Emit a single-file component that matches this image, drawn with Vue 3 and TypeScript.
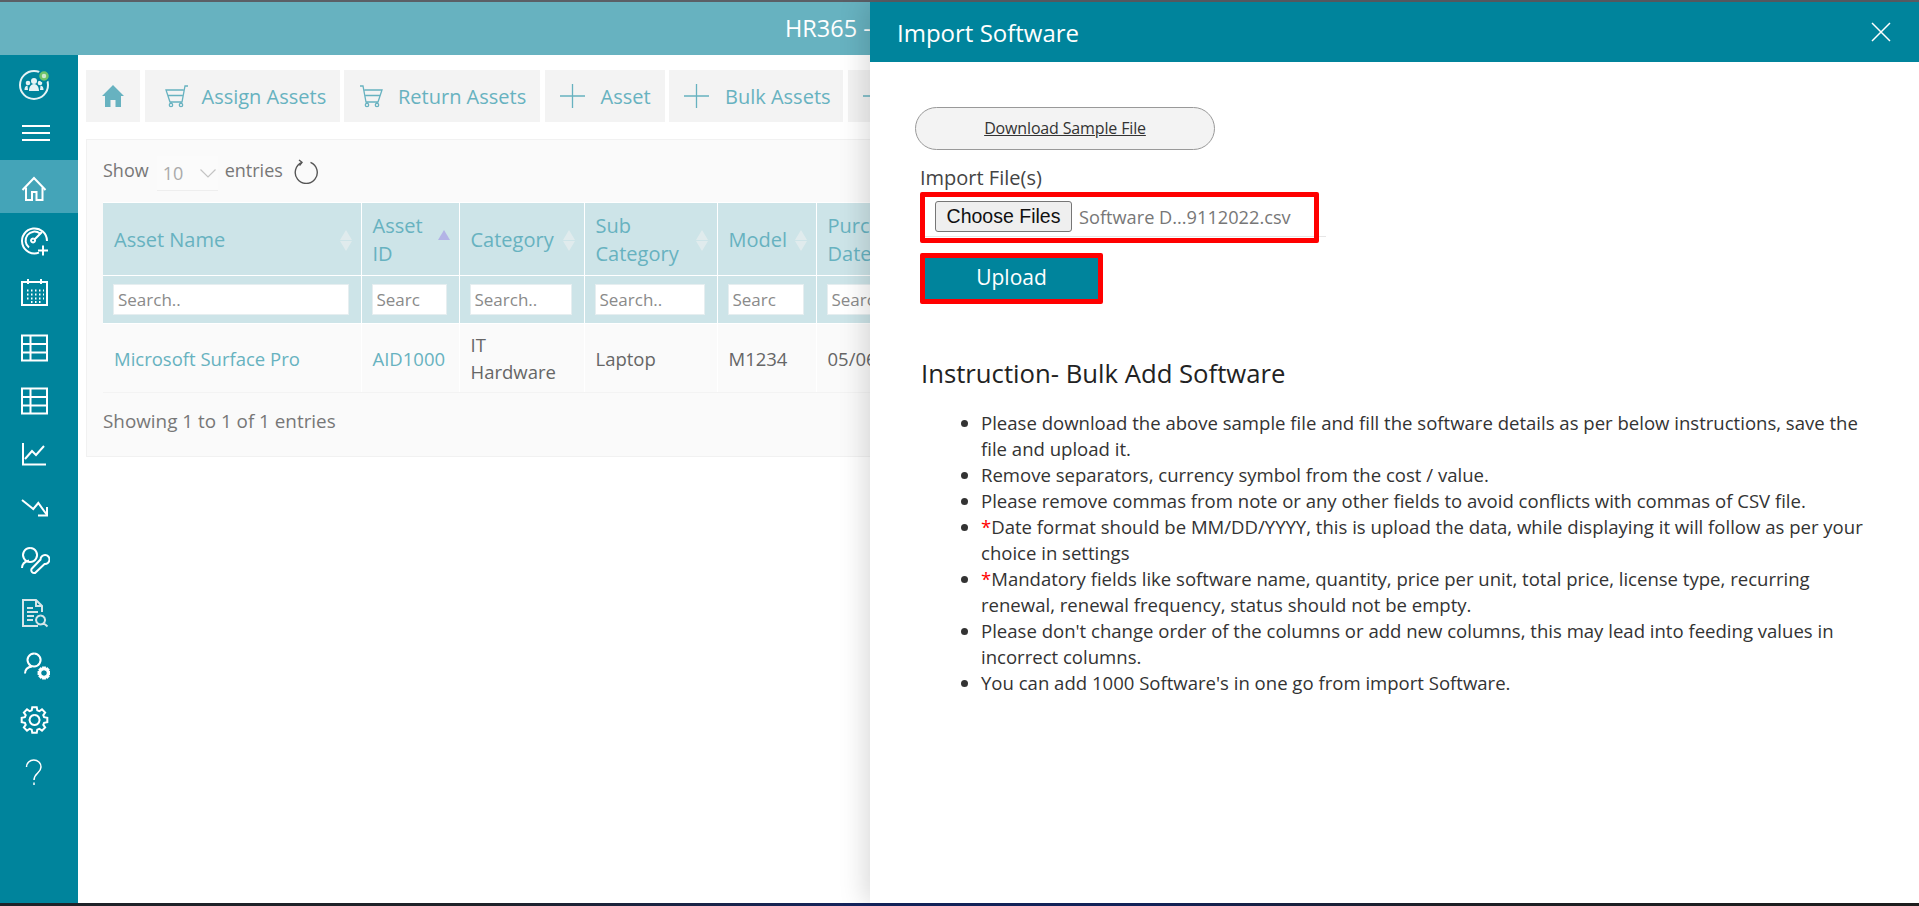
<script setup lang="ts">
interface NavItem {
  name: string
  paths: string[]
  active?: boolean
  muted?: boolean
  thin?: boolean
}

// gear outline with square-ish teeth
function gearPath(cx: number, cy: number, outer: number, inner: number, teeth: number): string {
  const step = (Math.PI * 2) / teeth
  const pts: string[] = []
  for (let i = 0; i < teeth; i++) {
    const a = i * step - Math.PI / 2
    const offs: [number, number][] = [
      [-0.36, inner],
      [-0.22, outer],
      [0.22, outer],
      [0.36, inner]
    ]
    for (const [o, r] of offs) {
      const t = a + o * step
      pts.push(`${(cx + Math.cos(t) * r).toFixed(2)} ${(cy + Math.sin(t) * r).toFixed(2)}`)
    }
  }
  return 'M' + pts.join('L') + 'Z'
}

const tableIcon = ['M4 4.500h25v25H4z', 'M4 13h25M4 21.500h25M12.500 4.500v25']

const navItems: NavItem[] = [
  { name: 'home', active: true, paths: ['M4.500 19 16 7l11.500 12', 'M8 16.500V29h6v-8h4.500v8h6V16.500'] },
  {
    name: 'dashboard',
    paths: [
      'M21 28.600A12.500 12.500 0 1 1 29 17',
      'M11 23.500A8.500 8.500 0 0 1 22 9.500',
      'M15 14.500a2 2 0 1 0 .1 0M16.500 15.500 24 8',
      'M20 26.500h10M25 21.500v10'
    ]
  },
  {
    name: 'calendar',
    paths: [
      'M4 5h25v23H4z',
      'M10 2v5M23 2v5',
      'M9 13.500h1.500M13 13.500h1.500M17 13.500h1.500M21 13.500h1.500M25 13.500h1',
      'M9 17.500h1.500M13 17.500h1.500M17 17.500h1.500M21 17.500h1.500M25 17.500h1',
      'M9 21.500h1.500M13 21.500h1.500M17 21.500h1.500M21 21.500h1.500M25 21.500h1',
      'M13 25h1.500M17 25h1.500M21 25h1.500'
    ]
  },
  { name: 'assets', paths: tableIcon },
  { name: 'software', paths: tableIcon },
  { name: 'growth', paths: ['M5 6v21.500h23', 'M7 22l7-8 4 4 8-9'] },
  { name: 'decline', paths: ['M4 10l11.300 9 5-6L29 25', 'M29 17v8.500h-9'] },
  {
    name: 'user-tool',
    paths: [
      'M12 4a7 7 0 1 0 .1 0',
      'M4 24c0-4.500 3-6.500 7-7.500',
      'M13.500 25l9-9.500a4.500 4.500 0 1 1 4 4.500l-9.500 9a3 3 0 0 1-3.500-4z'
    ]
  },
  {
    name: 'report',
    muted: true,
    paths: [
      'M20 29H5V3h13l6 6v6',
      'M18 3v6h6',
      'M9 11h6M9 15h11M9 19h7M9 23h6',
      'M22.500 18.500a4.500 4.500 0 1 0 .1 0M25.500 26l4 3.500'
    ]
  },
  {
    name: 'user-settings',
    paths: [
      'M16 3.500a6.500 6.500 0 1 0 .1 0',
      'M7 23.500c0-4.500 3-6.500 7-7',
      gearPath(26, 23, 5.5, 3.7, 8)
    ]
  },
  { name: 'settings', paths: [gearPath(16.5, 16, 13, 10, 8), 'M16.500 11a5 5 0 1 0 .1 0'] },
  { name: 'help', thin: true, paths: ['M8.500 10c0-4 3.300-7 7.300-7s7.200 3 7.200 7c0 6-7 6-7 13', 'M16 25.500V28'] }
]

const toolButtons = [
  { label: 'Assign Assets', icon: 'cart', width: 195 },
  { label: 'Return Assets', icon: 'cart-flip', width: 196 },
  { label: 'Asset', icon: 'plus', width: 120 },
  { label: 'Bulk Assets', icon: 'plus', width: 174 }
]

const columns = [
  { label: 'Asset Name', width: 258, search: 'Search..', sort: 'none' },
  { label: 'Asset ID', width: 98, search: 'Searc', sort: 'asc' },
  { label: 'Category', width: 125, search: 'Search..', sort: 'none' },
  { label: 'Sub Category', width: 133, search: 'Search..', sort: 'none' },
  { label: 'Model', width: 99, search: 'Searc', sort: 'none' },
  { label: 'Purchase Date', width: 125, search: 'Search..', sort: 'none' }
]

const instructions = [
  { text: 'Please download the above sample file and fill the software details as per below instructions, save the file and upload it.' },
  { text: 'Remove separators, currency symbol from the cost / value.' },
  { text: 'Please remove commas from note or any other fields to avoid conflicts with commas of CSV file.' },
  { req: true, text: 'Date format should be MM/DD/YYYY, this is upload the data, while displaying it will follow as per your choice in settings' },
  { req: true, text: 'Mandatory fields like software name, quantity, price per unit, total price, license type, recurring renewal, renewal frequency, status should not be empty.' },
  { text: "Please don't change order of the columns or add new columns, this may lead into feeding values in incorrect columns." },
  { text: "You can add 1000 Software's in one go from import Software." }
]
</script>

<template>
  <div class="page">
    <div class="top-strip"></div>
    <header class="app-header">HR365 -</header>
    <div class="app-body">
      <aside class="sidebar">
        <div class="logo">
          <svg width="36" height="36" viewBox="0 0 36 36">
            <circle cx="17" cy="19" r="14" fill="none" stroke="#e6f3f5" stroke-width="2" />
            <circle cx="17" cy="15" r="3" fill="#e6f3f5" />
            <circle cx="11" cy="17" r="2.300" fill="#e6f3f5" />
            <circle cx="23" cy="17" r="2.300" fill="#e6f3f5" />
            <path d="M12 25c0-4 2-7 5-7s5 3 5 7zM7.500 24c0-3 1-4 3-4.500L11 24zM26.500 24c0-3-1-4-3-4.500L23 24z" fill="#e6f3f5" />
            <circle cx="27" cy="10" r="6.500" fill="#00849c" />
            <circle cx="27" cy="10" r="3.500" fill="#cfe8d0" stroke="#6fc46a" stroke-width="2.500" />
          </svg>
        </div>
        <div class="menu-toggle">
          <span></span>
          <span></span>
          <span></span>
        </div>
        <nav class="nav">
          <a v-for="item in navItems" :key="item.name" class="nav-item" :class="{ active: item.active }">
            <svg
              width="32"
              height="32"
              viewBox="0 0 32 32"
              fill="none"
              :stroke="item.muted ? '#d6e6e9' : '#fff'"
              :stroke-width="item.thin ? 1.5 : 2"
            >
              <path v-for="(d, i) in item.paths" :key="i" :d="d" />
            </svg>
          </a>
        </nav>
      </aside>

      <main class="content">
        <div class="toolbar">
          <button class="tool home-tool">
            <svg width="22" height="22" viewBox="0 0 22 22" fill="#67b2c0">
              <path d="M11 0 0 11h3v11h5.500v-7h5v7H19V11h3z" />
            </svg>
          </button>
          <button v-for="b in toolButtons" :key="b.label" class="tool" :style="{ width: b.width + 'px' }">
            <svg v-if="b.icon === 'plus'" class="tool-icon" width="25" height="26" viewBox="0 0 25 26" stroke="#67b2c0" stroke-width="1.300">
              <path d="M12.500 1v24M0 13h25" />
            </svg>
            <svg
              v-else
              class="tool-icon"
              :class="b.icon === 'cart' ? 'cart' : 'flip'"
              width="25"
              height="26"
              viewBox="0 0 25 26"
              fill="none"
              stroke="#67b2c0"
              stroke-width="1.300"
            >
              <path d="M24 3h-3l-3 16H6L2 7h17.500M3.500 12.500h15M7 19v1M17 19v1" />
              <circle cx="7" cy="22" r="1.700" />
              <circle cx="17" cy="22" r="1.700" />
            </svg>
            <span>{{ b.label }}</span>
          </button>
          <button class="tool tail-tool">
            <svg class="tool-icon" width="25" height="26" viewBox="0 0 25 26" stroke="#67b2c0" stroke-width="1.300">
              <path d="M12.500 1v24M0 13h25" />
            </svg>
          </button>
        </div>

        <section class="card">
          <div class="length-row">
            <span class="length-text">Show</span>
            <span class="length-select">
              <span>10</span>
              <svg width="16" height="9" viewBox="0 0 16 9" fill="none" stroke="#c4c4c4" stroke-width="1.200">
                <path d="M.5.500 8 8 15.500.500" />
              </svg>
            </span>
            <span class="length-text">entries</span>
            <svg class="refresh" width="25" height="25" viewBox="0 0 25 25" fill="none" stroke="#555" stroke-width="1.400">
              <path d="M16.500 3.300A11 11 0 1 1 8 3.300" />
              <path d="M5 1l3 2.300L5.500 6.500" />
            </svg>
          </div>

          <table class="grid">
            <colgroup>
              <col v-for="c in columns" :key="c.label" :style="{ width: c.width + 'px' }" />
            </colgroup>
            <thead>
              <tr class="head-row">
                <th v-for="c in columns" :key="c.label">
                  <div class="head-cell">
                    <span class="head-label">{{ c.label }}</span>
                    <span class="sorter" :class="c.sort"><i class="up"></i><i class="down"></i></span>
                  </div>
                </th>
              </tr>
              <tr class="search-row">
                <th v-for="c in columns" :key="c.label">
                  <input class="search" type="text" :placeholder="c.search" />
                </th>
              </tr>
            </thead>
            <tbody>
              <tr class="data-row">
                <td class="link">Microsoft Surface Pro</td>
                <td class="link">AID1000</td>
                <td>IT Hardware</td>
                <td>Laptop</td>
                <td>M1234</td>
                <td>05/06</td>
              </tr>
            </tbody>
          </table>

          <div class="info">Showing 1 to 1 of 1 entries</div>
        </section>
      </main>
    </div>
    <div class="bottom-strip"></div>

    <aside class="drawer">
      <div class="drawer-head">
        <span>Import Software</span>
        <svg width="20" height="20" viewBox="0 0 20 20" stroke="#fff" stroke-width="1.500">
          <path d="M1 1l18 18M19 1 1 19" />
        </svg>
      </div>
      <div class="drawer-body">
        <a class="sample-btn">Download Sample File</a>
        <label class="file-label">Import File(s)</label>
        <div class="file-box">
          <span class="file-btn">Choose Files</span>
          <span class="file-name">Software D...9112022.csv</span>
        </div>
        <button class="upload-btn">Upload</button>
        <h3 class="instr-title">Instruction- Bulk Add Software</h3>
        <ul class="instr-list">
          <li v-for="(row, i) in instructions" :key="i"><span v-if="row.req" class="req">*</span>{{ row.text }}</li>
        </ul>
      </div>
    </aside>
  </div>
</template>

<style scoped>
.page {
  position: relative;
  width: 1919px;
  height: 906px;
  display: flex;
  flex-direction: column;
  overflow: hidden;
  background: #fff;
  font-family: "Open Sans", "Noto Sans", sans-serif;
  color: #666;
}

.top-strip {
  height: 2px;
  background: #5b5f66;
}

.app-header {
  height: 53px;
  flex: none;
  background: #67b2c0;
  color: #fff;
  font-size: 23.500px;
  line-height: 52px;
  padding-left: 785px;
}

.app-body {
  flex: 1;
  display: flex;
  min-height: 0;
}

.bottom-strip {
  height: 3px;
  flex: none;
  background: linear-gradient(90deg, #1f2228 0%, #1f2228 25%, #14245e 45%, #14245e 60%, #1f2228 75%, #1f1f1f 100%);
}

.sidebar {
  width: 78px;
  flex: none;
  background: #00849c;
  display: flex;
  flex-direction: column;
}

.logo {
  height: 52px;
  padding: 11px 0 0 17px;
  box-sizing: border-box;
}

.menu-toggle {
  height: 53px;
  padding: 18px 0 0 22px;
  box-sizing: border-box;
  display: flex;
  flex-direction: column;
  gap: 5px;
}

.menu-toggle span {
  display: block;
  width: 28px;
  height: 2px;
  background: #fff;
}

.nav-item {
  display: flex;
  height: 53.300px;
  padding-left: 18px;
  align-items: center;
  box-sizing: border-box;
}

.nav-item.active {
  background: #44a4b8;
}

.content {
  flex: 1;
  min-width: 0;
  padding: 15px 0 0 8px;
  overflow: hidden;
}

.toolbar {
  display: flex;
  gap: 4.500px;
  height: 52px;
}

.tool {
  border: 0;
  background: #f3f3f3;
  color: #67b2c0;
  font-family: inherit;
  font-size: 20px;
  height: 52px;
  padding: 0 0 0 15px;
  display: flex;
  align-items: center;
  white-space: nowrap;
  flex: none;
}

.home-tool {
  width: 54px;
  padding: 0;
  justify-content: center;
}

.tail-tool {
  width: 200px;
}

.tool-icon {
  margin-right: 16px;
  flex: none;
}

.tool-icon.cart {
  margin-left: 4px;
  margin-right: 13px;
}

.tool-icon.flip {
  margin-right: 14px;
  transform: scaleX(-1);
}

.card {
  margin-top: 17px;
  width: 1100px;
  height: 318px;
  box-sizing: border-box;
  background: #fafafa;
  border: 1px solid #f1f1f1;
  padding: 0 0 0 16px;
}

.length-row {
  display: flex;
  align-items: center;
  height: 62px;
  font-size: 18px;
  color: #777;
}

.length-text {
  margin-bottom: 3px;
}

.length-select {
  width: 61px;
  height: 35px;
  margin: 5px 7px 0 8px;
  padding-left: 6px;
  display: flex;
  align-items: center;
  justify-content: space-between;
  padding-right: 2px;
  box-sizing: border-box;
  background: #fbfbfb;
  border-bottom: 1px solid #eee;
  color: #aaa;
}

.refresh {
  margin-left: 11px;
  margin-top: 1px;
}

.grid {
  border-collapse: collapse;
  table-layout: fixed;
  width: 838px;
  font-size: 18.500px;
}

.grid th,
.grid td {
  border: 1px solid #fff;
  border-left: 0;
  padding: 0;
  font-weight: 400;
  text-align: left;
}

.grid th:last-child,
.grid td:last-child {
  border-right: 0;
}

.head-row th {
  height: 72px;
  background: #cde4e8;
}

.head-cell {
  display: flex;
  align-items: center;
  justify-content: space-between;
  padding: 2px 9px 0 11px;
  color: #67b2c0;
  line-height: 28px;
  font-size: 20px;
}

.sorter {
  display: flex;
  flex-direction: column;
  gap: 1px;
  flex: none;
}

.sorter i {
  display: block;
  width: 0;
  height: 0;
  border-left: 6px solid transparent;
  border-right: 6px solid transparent;
}

.sorter .up {
  border-bottom: 10px solid #e0ebed;
}

.sorter .down {
  border-top: 10px solid #e0ebed;
}

.sorter.asc .up {
  border-bottom-color: #b3b3e6;
}

.sorter.asc .down {
  border-top-color: transparent;
}

.search-row th {
  height: 47px;
  background: #cde4e8;
  padding: 0 12px 0 10px;
}

.search {
  display: block;
  width: 100%;
  height: 31px;
  box-sizing: border-box;
  border: 1px solid #e6eef0;
  background: #fff;
  padding: 0 4px;
  outline: none;
  font-family: inherit;
  font-size: 17px;
}

.search::placeholder {
  color: #8a8a8a;
  opacity: 1;
}

.data-row td {
  height: 68px;
  padding: 0 12px 0 11px;
  color: #666;
  line-height: 27px;
  border-bottom: 1px solid #f3f3f3;
}

.data-row td.link {
  color: #67b2c0;
}

.info {
  margin-top: 15px;
  font-size: 18.850px;
  color: #777;
  line-height: 26px;
}

.drawer {
  position: absolute;
  top: 2px;
  right: 0;
  bottom: 3px;
  z-index: 1;
  width: 1049px;
  background: #fff;
  box-shadow: -5px 0 25px rgba(0, 0, 0, 0.15);
  display: flex;
  flex-direction: column;
}

.drawer-head {
  height: 60px;
  flex: none;
  background: #00849c;
  color: #fff;
  font-size: 24px;
  display: flex;
  align-items: center;
  justify-content: space-between;
  padding: 0 28px 0 27px;
}

.drawer-body {
  padding: 45px 0 0 45px;
  display: flex;
  flex-direction: column;
  align-items: flex-start;
}

.sample-btn {
  width: 300px;
  height: 43px;
  box-sizing: border-box;
  border: 1px solid #999;
  border-radius: 22px;
  background: #f3f3f3;
  color: #333;
  text-decoration: underline;
  font-size: 16px;
  letter-spacing: -0.15px;
  padding-bottom: 2px;
  display: flex;
  align-items: center;
  justify-content: center;
}

.file-label {
  margin: 14px 0 0 5px;
  font-size: 20px;
  color: #444;
  line-height: 28px;
}

.file-box {
  position: relative;
  margin: 0 0 0 5px;
  width: 399px;
  height: 51px;
  box-sizing: border-box;
  border: 5px solid #f00;
  border-radius: 2px;
  padding: 4px 0 0 10px;
  display: flex;
  align-items: flex-start;
}

/* input underline, runs out past the red frame */
.file-box::after {
  content: "";
  position: absolute;
  left: 0;
  right: -12px;
  bottom: 1px;
  height: 1px;
  background: #e6e6e6;
  z-index: -1;
}

.file-btn {
  width: 137px;
  height: 31px;
  flex: none;
  box-sizing: border-box;
  background: #efefef;
  border: 1px solid #767676;
  border-radius: 3px;
  color: #111;
  font-family: "Liberation Sans", Arial, sans-serif;
  font-size: 19.500px;
  display: flex;
  align-items: center;
  justify-content: center;
}

.file-name {
  margin: 4px 0 0 7px;
  font-size: 18.200px;
  color: #777;
}

.upload-btn {
  margin: 10px 0 0 5px;
  width: 183px;
  height: 51px;
  box-sizing: border-box;
  border: 5px solid #f00;
  border-radius: 2px;
  background: #00849c;
  color: #fff;
  padding: 0 0 3px;
  font-family: inherit;
  font-size: 21px;
}

.instr-title {
  margin: 54px 0 0 6px;
  font-size: 25.700px;
  line-height: 32px;
  font-weight: 400;
  color: #222;
}

.instr-list {
  margin: 20px 0 0 6px;
  padding: 0 0 0 60px;
  width: 954px;
  font-size: 18.560px;
  line-height: 26px;
  color: #333;
  box-sizing: border-box;
}

.req {
  color: #f00;
}
</style>

<style>
html,
body {
  margin: 0;
  background: #fff;
}
</style>
